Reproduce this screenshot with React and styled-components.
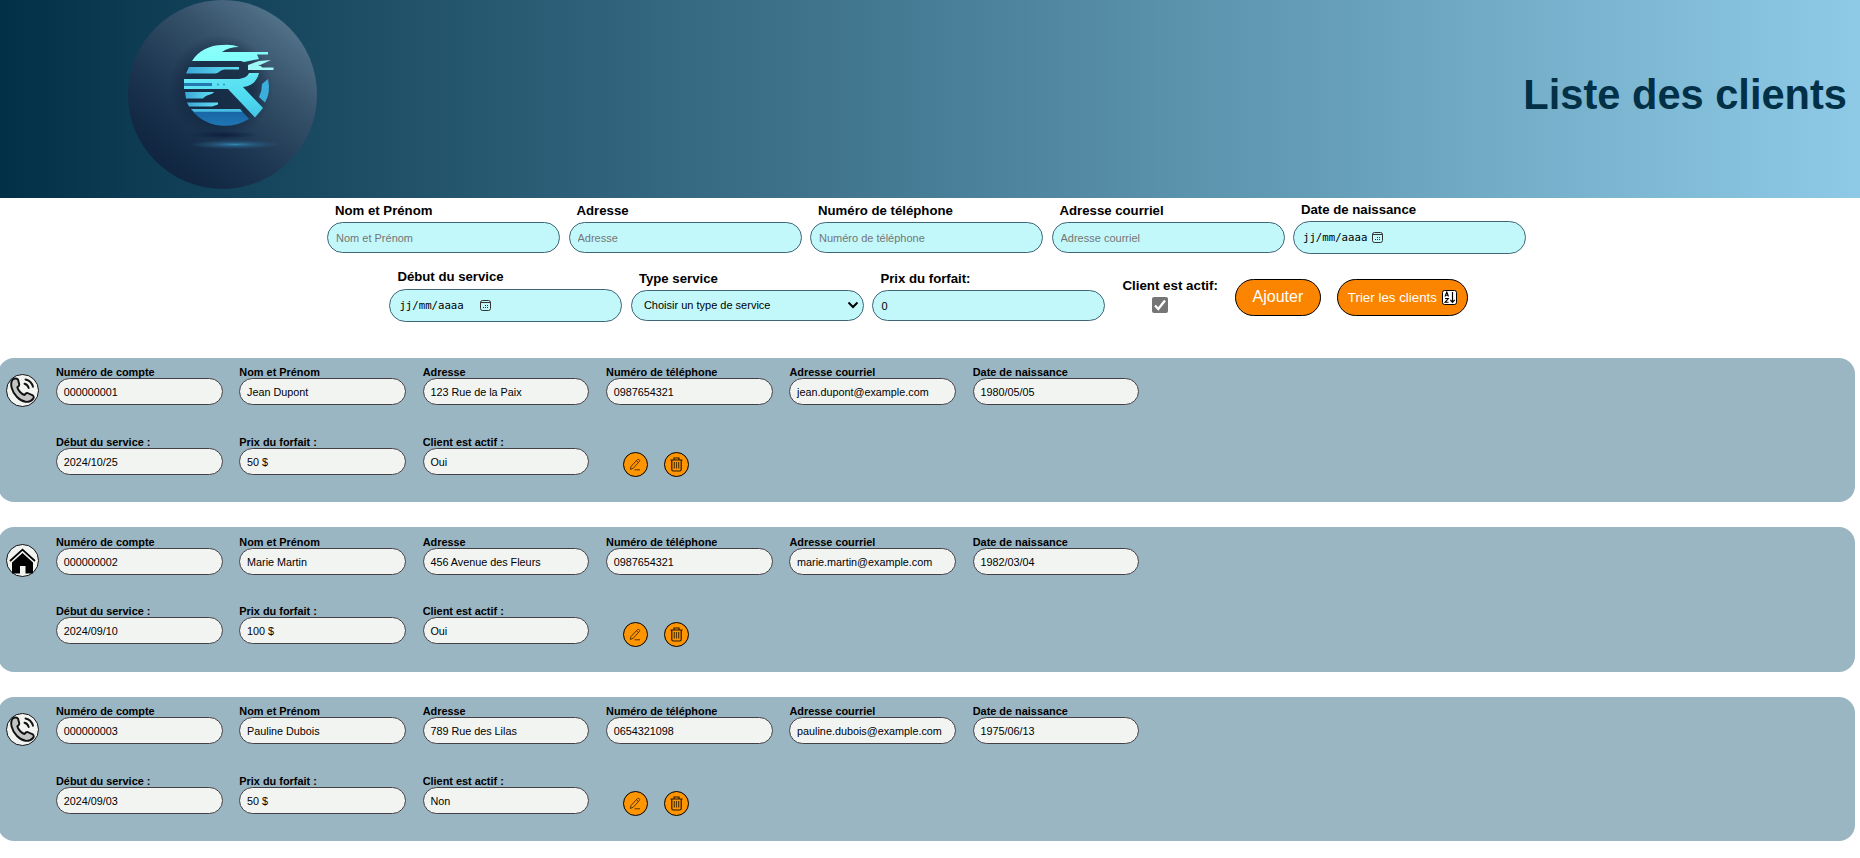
import React from "react";
import styled, { createGlobalStyle } from "styled-components";

const Global = createGlobalStyle`
  * { box-sizing: border-box; }
  body { margin: 0; background: #fff; color: #000; font-family: Arial, "Liberation Sans", sans-serif; overflow: hidden; }
  h1, p { margin: 0; }
`;

const Page = styled.div`
  height: 858px;
  overflow: hidden;
`;

const Header = styled.header`
  height: 198px;
  padding: 0 13px 9px 127.5px;
  display: flex;
  align-items: center;
  justify-content: space-between;
  background: linear-gradient(90deg, #023047, #8ecae6);
`;

const Title = styled.h1`
  font-size: 41.6px;
  line-height: 48px;
  color: #023047;
`;

const Form = styled.form`
  height: 159.9px;
  padding-top: 4px;
`;

const FormRow = styled.div`
  display: flex;
  align-items: center;
  gap: 8.5px;
  height: ${(p) => p.$h}px;
  padding-left: ${(p) => p.$left}px;
`;

const Field = styled.label`
  display: flex;
  flex-direction: column;
  width: 233px;
  font-size: 13.2px;
  font-weight: bold;
  line-height: 15px;
`;

const FieldLabel = styled.span`
  padding-left: 8px;
  margin-bottom: ${(p) => p.$space || 4}px;
`;

const inputLook = `
  width: 100%;
  border: 1px solid #3f6577;
  border-radius: 17px;
  background: #c3f8fb;
  font: 11px Arial, "Liberation Sans", sans-serif;
  color: #000;
`;

const Input = styled.input`
  ${inputLook}
  height: 31px;
  padding: 1px 8px 0;
  &::placeholder { color: #757575; }
`;

const SelectBox = styled.span`
  ${inputLook}
  height: 31px;
  padding: 0 4px 0 12px;
  display: flex;
  align-items: center;
  justify-content: space-between;
`;

const DateBox = styled.span`
  ${inputLook}
  height: 33px;
  padding: 0 9px 1px;
  display: flex;
  align-items: center;
  gap: ${(p) => p.$gap}px;
  font-family: "DejaVu Sans Mono", monospace;
  font-size: 10.7px;
`;

const CheckField = styled.label`
  display: flex;
  flex-direction: column;
  align-items: flex-start;
  width: 96px;
  margin: 0 8px 0 8.5px;
  font-size: 13.33px;
  font-weight: bold;
  line-height: 15px;
  white-space: nowrap;
`;

const CheckMark = styled.svg`
  margin: 4px 0 0 30px;
`;

const Button = styled.button`
  display: flex;
  align-items: center;
  justify-content: center;
  gap: 5px;
  width: ${(p) => p.$w}px;
  height: 37px;
  margin: 3px 7.5px 0 0;
  padding: 0;
  border: 1px solid #000;
  border-radius: 19px;
  background: #fb8500;
  color: #fff;
  font: ${(p) => p.$size}px Arial, "Liberation Sans", sans-serif;
`;

const List = styled.main`
  display: flex;
  flex-direction: column;
  gap: 25px;
  margin: 0 5px 0 -2px;
`;

const Card = styled.section`
  display: flex;
  height: 144.4px;
  padding: 8.3px 0 0 8px;
  border-radius: 16px;
  background: #9bb6c3;
`;

const Badge = styled.span`
  display: flex;
  align-items: center;
  justify-content: center;
  width: 33px;
  height: 33px;
  margin: 8.3px 17px 0 0;
  border: 1px solid #111;
  border-radius: 50%;
  background: #f2f4f2;
`;

const CardGrid = styled.div`
  display: grid;
  grid-template-columns: repeat(6, 166.5px);
  grid-auto-rows: 69.7px;
  column-gap: 16.85px;
`;

const Cell = styled.div`
  font-size: 10.9px;
  font-weight: bold;
  line-height: 12px;
`;

const Value = styled.p`
  height: 27px;
  padding: 1px 6.7px 0;
  border: 1px solid #454045;
  border-radius: 14px;
  background: #f2f4f2;
  font-size: 10.8px;
  font-weight: normal;
  line-height: 24px;
`;

const Actions = styled.div`
  display: flex;
  gap: 16px;
  padding: 16.3px 0 0 17px;
`;

const RoundButton = styled.button`
  display: flex;
  align-items: center;
  justify-content: center;
  width: 25px;
  height: 25px;
  padding: 0;
  border: 1px solid #000;
  border-radius: 50%;
  background: #ff9500;
`;

const Logo = () => (
  <svg width="189" height="189" viewBox="0 0 189 189">
    <defs>
      <linearGradient id="disc" x1="0.88" y1="0.12" x2="0.25" y2="0.9">
        <stop offset="0" stopColor="#54758b" />
        <stop offset="0.35" stopColor="#344f68" />
        <stop offset="0.7" stopColor="#1c3550" />
        <stop offset="1" stopColor="#102641" />
      </linearGradient>
      <linearGradient id="mark" gradientUnits="userSpaceOnUse" x1="80" y1="45" x2="90" y2="127">
        <stop offset="0" stopColor="#8dfffa" />
        <stop offset="0.25" stopColor="#80fcfa" />
        <stop offset="0.45" stopColor="#5fe3f4" />
        <stop offset="0.7" stopColor="#4fdaf0" />
        <stop offset="1" stopColor="#3fc0e4" />
      </linearGradient>
      <linearGradient id="stripe" x1="0" y1="0" x2="1" y2="0">
        <stop offset="0" stopColor="#3ba6d6" />
        <stop offset="1" stopColor="#62e0f2" />
      </linearGradient>
      <linearGradient id="base" x1="0" y1="0" x2="0" y2="1">
        <stop offset="0" stopColor="#1762a2" />
        <stop offset="1" stopColor="#1f76b4" />
      </linearGradient>
      <radialGradient id="glow">
        <stop offset="0" stopColor="#3286b0" />
        <stop offset="0.5" stopColor="#285f85" stopOpacity="0.6" />
        <stop offset="1" stopColor="#285f85" stopOpacity="0" />
      </radialGradient>
      <radialGradient id="under">
        <stop offset="0" stopColor="#0b1c3a" stopOpacity="0.8" />
        <stop offset="1" stopColor="#0b1c3a" stopOpacity="0" />
      </radialGradient>
      <radialGradient id="shade">
        <stop offset="0.6" stopColor="#0e2039" stopOpacity="0.6" />
        <stop offset="1" stopColor="#0e2039" stopOpacity="0" />
      </radialGradient>
    </defs>
    <circle cx="94.5" cy="94.5" r="94.5" fill="url(#disc)" />
    <circle cx="93" cy="87" r="52" fill="url(#shade)" />
    <ellipse cx="96" cy="135" rx="36" ry="4" fill="url(#under)" />
    <ellipse cx="107" cy="144.500" rx="46" ry="4.500" fill="url(#glow)" />
    <path d="M64 61 C70 51 82 45 94 45 Q104 44 111 47 Q101 47 94 52 H140 V54.500 H129 L131 59 L116 62 L113 61Z" fill="url(#mark)" />
    <path d="M120 65 L131 61 L143 60 L130 66 H133 L134 67.500 H145.500 V70 H120Z" fill="#a0f5f5" />
    <path d="M61 67 H111 V69.500 H97 C92 69.500 91 73.500 87 73.500 H58Z" fill="url(#stripe)" />
    <path d="M56 79 H111 C117 78 120 76 121 73 H131 C129 81 124 86 115 87 L135 108 L127 117.500 L100 89 H56Z" fill="url(#mark)" />
    <path d="M56 83 H84 V86 H56Z" fill="#2378b0" />
    <circle cx="90" cy="84.500" r="1" fill="#2f94bd" />
    <circle cx="96" cy="84.500" r="1" fill="#2f94bd" />
    <path d="M57 92 H86 C84 95 79 94 75 98.500 H58Z" fill="url(#stripe)" />
    <path d="M59 102.500 H90 V104.500 L84 106.500 H61Z" fill="url(#stripe)" />
    <path d="M63 109 H112 L121 119 C101 131 76 127 63 109Z" fill="url(#base)" />
    <path d="M63 109 H112 L114.500 111.700 H66Z" fill="#48bfe2" />
    <path d="M140 79 L134 84 Q134 91 131 97 L137 102.500 Q143 93 140 79Z" fill="#3caedb" />
  </svg>
);

const CalendarIcon = () => (
  <svg width="11" height="11" viewBox="0 0 11 11" fill="none" stroke="#333" strokeWidth="1">
    <rect x="0.500" y="0.500" width="10" height="10" rx="2" />
    <path d="M.5 2.500H10.500" />
    <path d="M5 5.500H9M3 7.500H8" strokeDasharray="1 1" />
  </svg>
);

const SortIcon = () => (
  <svg width="15" height="15" viewBox="0 0 15 15" fill="none" stroke="#000">
    <rect x="0.500" y="0.500" width="14" height="14" rx="2" fill="#fff" />
    <path d="M3 6.500L4.800 2L6.500 6.500M3.500 5.200H6M3 8.500H6.300L3 12.300H6.500" strokeWidth="1.100" />
    <path d="M10.500 2V12M8.300 9.800L10.500 12.300L12.700 9.800" strokeWidth="1.200" />
  </svg>
);

const PhoneIcon = () => (
  <svg width="27" height="27" viewBox="0 0 27 27" fill="none" stroke="#111" strokeLinecap="round" strokeLinejoin="round">
    <path d="M3.500 2.800Q6.500 .5 9 2.500L10.300 7.500Q10.300 9 8.300 10.300C9 13.500 12.500 17 15.500 18Q17 15.700 18.500 16L23.800 18.300Q25.500 20 24 22C20 26.500 13.500 25.500 8 20C2.500 14.500 .8 6.500 3.500 2.800Z" fill="#c4c4c4" strokeWidth="1.900" />
    <path d="M15.500 6.800Q18.500 7.500 19.700 11M16.500 2.500Q22.500 3.800 24 9.800" strokeWidth="1.900" />
  </svg>
);

const HouseIcon = () => (
  <svg width="29" height="29" viewBox="0 0 29 29">
    <path d="M2 15L14.500 3.700L27 15" fill="none" stroke="#000" strokeWidth="1.800" />
    <path d="M14.500 7L25 16.500V27.500H17.500V20H12V27.500H4V16.500Z" fill="#000" />
  </svg>
);

const PencilIcon = () => (
  <svg width="13" height="13" viewBox="0 0 13 13" fill="none" stroke="#5a3600" strokeWidth="1" strokeLinejoin="round">
    <path d="M2 8.500L8.500 1.500Q10 .7 10.700 2.300L10.500 3.300L4.300 10.200L1.300 11.500ZM7.500 2.800L9.500 4.500M5.500 11.800H11" />
  </svg>
);

const TrashIcon = () => (
  <svg width="13" height="15" viewBox="0 0 13 15" fill="none" stroke="#2a1900" strokeWidth="1.200">
    <path d="M.5 3H12.500M4 2.800V1H9V2.800M1.800 3V12.500Q1.800 14 3.300 14H9.700Q11.200 14 11.200 12.500V3" />
    <path d="M4.300 5V11.500M6.500 5V11.500M8.700 5V11.500" stroke="#5a3600" />
  </svg>
);

const clients = [
  { kind: "phone", no: "000000001", name: "Jean Dupont", address: "123 Rue de la Paix", phone: "0987654321", mail: "jean.dupont@example.com", birth: "1980/05/05", start: "2024/10/25", price: "50 $", active: "Oui" },
  { kind: "house", no: "000000002", name: "Marie Martin", address: "456 Avenue des Fleurs", phone: "0987654321", mail: "marie.martin@example.com", birth: "1982/03/04", start: "2024/09/10", price: "100 $", active: "Oui" },
  { kind: "phone", no: "000000003", name: "Pauline Dubois", address: "789 Rue des Lilas", phone: "0654321098", mail: "pauline.dubois@example.com", birth: "1975/06/13", start: "2024/09/03", price: "50 $", active: "Non" },
];

const columns = [
  ["Numéro de compte", "no"],
  ["Nom et Prénom", "name"],
  ["Adresse", "address"],
  ["Numéro de téléphone", "phone"],
  ["Adresse courriel", "mail"],
  ["Date de naissance", "birth"],
  ["Début du service :", "start"],
  ["Prix du forfait :", "price"],
  ["Client est actif :", "active"],
];

const ClientCard = ({ client }) => (
  <Card>
    <Badge>{client.kind === "phone" ? <PhoneIcon /> : <HouseIcon />}</Badge>
    <CardGrid>
      {columns.map(([label, key]) => (
        <Cell key={key}>
          {label}
          <Value>{client[key]}</Value>
        </Cell>
      ))}
      <Actions>
        <RoundButton type="button" aria-label="Modifier"><PencilIcon /></RoundButton>
        <RoundButton type="button" aria-label="Supprimer"><TrashIcon /></RoundButton>
      </Actions>
    </CardGrid>
  </Card>
);

const DateField = ({ label, gap, space }) => (
  <Field as="div">
    <FieldLabel $space={space}>{label}</FieldLabel>
    <DateBox $gap={gap}>jj/mm/aaaa<CalendarIcon /></DateBox>
  </Field>
);

export default function App() {
  return (
    <Page>
      <Global />
      <Header>
        <Logo />
        <Title>Liste des clients</Title>
      </Header>
      <Form>
        <FormRow $h={52} $left={327}>
          {["Nom et Prénom", "Adresse", "Numéro de téléphone", "Adresse courriel"].map((label) => (
            <Field key={label}>
              <FieldLabel>{label}</FieldLabel>
              <Input placeholder={label} />
            </Field>
          ))}
          <DateField label="Date de naissance" gap={5} />
        </FormRow>
        <FormRow $h={83} $left={389.4}>
          <DateField label="Début du service" gap={16} space={5} />
          <Field as="div">
            <FieldLabel>Type service</FieldLabel>
            <SelectBox>
              Choisir un type de service
              <svg width="12" height="8" viewBox="0 0 12 8" fill="none" stroke="#000" strokeWidth="2"><path d="M1.500 1.500L6 6L10.500 1.500" /></svg>
            </SelectBox>
          </Field>
          <Field>
            <FieldLabel>Prix du forfait:</FieldLabel>
            <Input defaultValue="0" />
          </Field>
          <CheckField as="div">
            Client est actif:
            <CheckMark width="16" height="16" viewBox="0 0 16 16">
              <rect width="16" height="16" rx="2" fill="#757575" />
              <path d="M3 8.500L6.300 12L13 3.500" fill="none" stroke="#fff" strokeWidth="2.300" />
            </CheckMark>
          </CheckField>
          <Button type="button" $w={86} $size={16}>Ajouter</Button>
          <Button type="button" $w={131} $size={13.33}>Trier les clients<SortIcon /></Button>
        </FormRow>
      </Form>
      <List>
        {clients.map((client) => <ClientCard key={client.no} client={client} />)}
      </List>
    </Page>
  );
}
